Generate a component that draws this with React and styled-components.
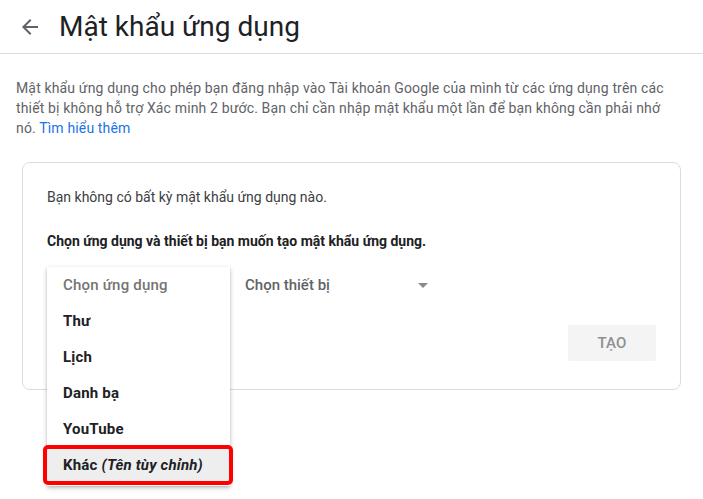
import styled, { createGlobalStyle } from 'styled-components';

const GlobalStyle = createGlobalStyle`
    html, body {
        margin: 0;
        padding: 0;
        background: #fff;
    }
    body {
        font-family: Roboto, "Noto Sans", Arial, sans-serif;
        color: #202124;
        -webkit-font-smoothing: antialiased;
    }
`;

const Page = styled.div`
    width: 703px;
    min-height: 499px;
    overflow: hidden;
`;

const Header = styled.header`
    display: flex;
    align-items: center;
    height: 53px;
    padding-left: 18px;
    border-bottom: 1px solid #dadce0;
`;

const BackButton = styled.button`
    display: flex;
    align-items: center;
    justify-content: center;
    width: 24px;
    height: 24px;
    padding: 0;
    margin: 0 17px 0 0;
    border: none;
    background: none;
    color: #5f6368;
    cursor: pointer;
`;

const Title = styled.h1`
    margin: 0;
    font-size: 28px;
    font-weight: 400;
    color: #202124;
`;

const Intro = styled.p`
    width: 664px;
    margin: 24px 16px 0;
    font-size: 14px;
    line-height: 20px;
    letter-spacing: 0.15px;
    color: #5f6368;
`;

const Link = styled.a`
    color: #1a73e8;
    text-decoration: none;
`;

const Card = styled.section`
    margin: 24px 22px 0;
    padding: 24px 24px 28px;
    border: 1px solid #dadce0;
    border-radius: 8px;
    display: flex;
    flex-direction: column;
`;

const CardText = styled.p`
    margin: 0 0 ${p => (p.$strong ? 16 : 24)}px;
    font-size: 14px;
    line-height: 20px;
    font-weight: ${p => (p.$strong ? 700 : 400)};
    color: ${p => (p.$strong ? '#202124' : '#3c4043')};
`;

const SelectRow = styled.div`
    display: flex;
    align-items: center;
    height: 36px;
`;

const SelectBox = styled.div`
    position: relative;
    display: flex;
    align-items: center;
    justify-content: space-between;
    width: ${p => p.$width}px;
    height: 36px;
    padding: 0 16px 0 15px;
    box-sizing: border-box;
    font-size: 15px;
    font-weight: 500;
    color: #5f6368;
`;

const SelectLabel = styled.span`
    visibility: ${p => (p.$hidden ? 'hidden' : 'visible')};
`;

const Caret = styled.span`
    width: 0;
    height: 0;
    border-left: 5px solid transparent;
    border-right: 5px solid transparent;
    border-top: 5px solid #8a8a8a;
`;

const Menu = styled.ul`
    position: absolute;
    top: 0;
    left: 0;
    width: 183px;
    margin: 0;
    padding: 0 0 3px;
    list-style: none;
    background: #fff;
    box-shadow: 0 2px 5px rgba(0, 0, 0, 0.22), 0 1px 2px rgba(0, 0, 0, 0.12);
    z-index: 2;
`;

const MenuItem = styled.li`
    position: relative;
    display: flex;
    align-items: center;
    height: 36px;
    padding: 0 16px;
    font-size: 15px;
    letter-spacing: 0.2px;
    font-weight: ${p => (p.$placeholder ? 500 : 700)};
    color: ${p => (p.$placeholder ? '#757575' : '#202124')};
    background: ${p => (p.$active ? '#eeeeee' : 'transparent')};
    white-space: nowrap;

    em {
        margin-left: 4px;
        font-style: italic;
    }

    ${p => p.$marked && `
        &::after {
            content: '';
            position: absolute;
            top: -2px;
            bottom: -2px;
            left: -4px;
            right: -3px;
            border: 4px solid #ff0000;
            border-radius: 5px;
        }
    `}
`;

const Actions = styled.div`
    display: flex;
    justify-content: flex-end;
    margin-top: 22px;
`;

const CreateButton = styled.button`
    width: 88px;
    height: 36px;
    border: none;
    border-radius: 2px;
    background: #f4f4f4;
    color: #8f8f8f;
    font-family: inherit;
    font-size: 15px;
    font-weight: 500;
    letter-spacing: 0.2px;
`;

const apps = ['Thư', 'Lịch', 'Danh bạ', 'YouTube'];

const ArrowBack = () => (
    <svg width="24" height="24" viewBox="0 0 24 24" fill="currentColor">
        <path d="M20 11H7.83l5.59-5.59L12 4l-8 8 8 8 1.41-1.41L7.83 13H20v-2z" />
    </svg>
);

const App = () => {
    const appMenuOpen = true;

    return (
        <Page>
            <GlobalStyle />
            <Header>
                <BackButton aria-label="Quay lại">
                    <ArrowBack />
                </BackButton>
                <Title>Mật khẩu ứng dụng</Title>
            </Header>
            <Intro>
                Mật khẩu ứng dụng cho phép bạn đăng nhập vào Tài khoản Google của mình từ các ứng dụng trên các
                thiết bị không hỗ trợ Xác minh 2 bước. Bạn chỉ cần nhập mật khẩu một lần để bạn không cần phải nhớ
                nó. <Link href="#">Tìm hiểu thêm</Link>
            </Intro>
            <Card>
                <CardText>Bạn không có bất kỳ mật khẩu ứng dụng nào.</CardText>
                <CardText $strong>Chọn ứng dụng và thiết bị bạn muốn tạo mật khẩu ứng dụng.</CardText>
                <SelectRow>
                    <SelectBox $width={183}>
                        <SelectLabel $hidden={appMenuOpen}>Chọn ứng dụng</SelectLabel>
                        {appMenuOpen && (
                            <Menu>
                                <MenuItem $placeholder>Chọn ứng dụng</MenuItem>
                                {apps.map(app => (
                                    <MenuItem key={app}>{app}</MenuItem>
                                ))}
                                <MenuItem $active $marked>
                                    Khác<em>(Tên tùy chỉnh)</em>
                                </MenuItem>
                            </Menu>
                        )}
                    </SelectBox>
                    <SelectBox $width={214}>
                        <SelectLabel>Chọn thiết bị</SelectLabel>
                        <Caret />
                    </SelectBox>
                </SelectRow>
                <Actions>
                    <CreateButton disabled>TẠO</CreateButton>
                </Actions>
            </Card>
        </Page>
    );
};

export default App;
